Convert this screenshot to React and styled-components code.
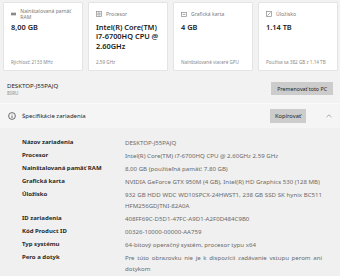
import React from 'react';
import styled, {createGlobalStyle} from 'styled-components';

const GlobalStyle = createGlobalStyle`
  html, body {
    margin: 0;
    padding: 0;
    background: #f2f2f2;
  }
  body {
    font-family: "Noto Sans", "Open Sans", sans-serif;
    color: #1b1b1b;
  }
`;

const Page = styled.div`
  width: 340px;
  height: 276px;
  overflow: hidden;
  background: #f2f2f2;
`;

const CardGrid = styled.div`
  display: grid;
  grid-template-columns: repeat(4, 1fr);
  gap: 5px;
  padding: 2px 2px 0 3px;
`;

const Card = styled.div`
  height: 69px;
  box-sizing: border-box;
  background: #ffffff;
  border: 1px solid #e4e4e4;
  border-radius: 1px;
  padding: 7px 6px 5px 7px;
  display: flex;
  flex-direction: column;
`;

const CardLabel = styled.div`
  display: flex;
  align-items: center;
  gap: 4px;
  font-size: 5.1px;
  color: #7a7a7a;
  height: 8px;
`;

const CardTitle = styled.div`
  margin-top: 5px;
  font-size: 7.4px;
  font-weight: 600;
  line-height: 9.3px;
  color: #1a1a1a;
`;

const CardFooter = styled.div`
  margin-top: auto;
  font-size: 4.6px;
  color: #8a8a8a;
  white-space: nowrap;
`;

const DeviceRow = styled.div`
  display: flex;
  align-items: center;
  justify-content: space-between;
  height: 29px;
  margin-top: 3px;
  padding: 0 7px;
  border-bottom: 1px solid #fafafa;
`;

const DeviceName = styled.div`
  font-size: 6.1px;
  color: #222;
  line-height: 8px;
`;

const DeviceModel = styled.div`
  font-size: 4.5px;
  color: #8a8a8a;
  line-height: 6px;
`;

const Button = styled.div`
  background: #cccccc;
  color: #1f1f1f;
  font-size: ${p => p.$size || 5.5}px;
  height: ${p => p.$h || 13}px;
  padding: 0 ${p => p.$px || 6}px;
  display: flex;
  align-items: center;
  justify-content: center;
  white-space: nowrap;
`;

const SpecHeader = styled.div`
  display: flex;
  align-items: center;
  height: 24px;
  padding: 0 8px 0 8px;
  background: #f5f5f5;
  gap: 6px;
`;

const SpecTitle = styled.div`
  flex: 1;
  font-size: 6px;
  color: #222;
`;

const Chevron = styled.div`
  width: 20px;
  display: flex;
  justify-content: flex-end;
`;

const SpecBody = styled.div`
  padding: 8px 0 0 22px;
  background: #f0f0f0;
  height: 200px;
`;

const SpecRow = styled.div`
  display: grid;
  grid-template-columns: 103px 197px;
  padding: 1px 0;
  line-height: 11px;
`;

const SpecLabel = styled.div`
  font-size: 6px;
  font-weight: 700;
  color: #2a2a2a;
`;

const SpecValue = styled.div`
  font-size: 6.1px;
  color: #6a6a6a;
  text-align: justify;
`;

const RamIcon = () => (
  <svg width="6" height="4" viewBox="0 0 6 4">
    <rect x="0" y="0.5" width="6" height="3" fill="#8a8a8a" />
  </svg>
);

const CpuIcon = () => (
  <svg width="6" height="6" viewBox="0 0 6 6" fill="none" stroke="#8a8a8a" strokeWidth="0.7">
    <rect x="0.5" y="0.5" width="5" height="5" />
    <rect x="2" y="2" width="2" height="2" />
  </svg>
);

const GpuIcon = () => (
  <svg width="6" height="5" viewBox="0 0 6 5" fill="none" stroke="#8a8a8a" strokeWidth="0.7">
    <rect x="0.4" y="0.4" width="5.2" height="4" />
    <line x1="1.5" y1="2.4" x2="4.5" y2="2.4" />
  </svg>
);

const DiskIcon = () => (
  <svg width="6" height="6" viewBox="0 0 6 6" fill="none" stroke="#8a8a8a" strokeWidth="0.7">
    <rect x="0.5" y="0.5" width="5" height="5" />
    <line x1="1.5" y1="4.5" x2="4.5" y2="1.5" />
  </svg>
);

const InfoIcon = () => (
  <svg width="8" height="8" viewBox="0 0 8 8" fill="none" stroke="#333" strokeWidth="0.7">
    <circle cx="4" cy="4" r="3.4" />
    <line x1="4" y1="3.5" x2="4" y2="6" />
    <circle cx="4" cy="2.3" r="0.3" fill="#333" stroke="none" />
  </svg>
);

const ChevronUp = () => (
  <svg width="6" height="4" viewBox="0 0 6 4" fill="none" stroke="#777" strokeWidth="0.6">
    <polyline points="0.5,3.2 3,0.8 5.5,3.2" />
  </svg>
);

const CARDS = [
  {icon: <RamIcon />, label: 'Nainštalovaná pamäť RAM', title: '8,00 GB', footer: 'Rýchlosť: 2133 MHz'},
  {icon: <CpuIcon />, label: 'Procesor', title: 'Intel(R) Core(TM) i7-6700HQ CPU @ 2.60GHz', footer: '2.59 GHz'},
  {icon: <GpuIcon />, label: 'Grafická karta', title: '4 GB', footer: 'Nainštalované viaceré GPU'},
  {icon: <DiskIcon />, label: 'Úložisko', title: '1.14 TB', footer: 'Používa sa 382 GB z 1.14 TB'},
];

const SPECS = [
  ['Názov zariadenia', 'DESKTOP-J55PAJQ'],
  ['Procesor', 'Intel(R) Core(TM) i7-6700HQ CPU @ 2.60GHz   2.59 GHz'],
  ['Nainštalovaná pamäť RAM', '8,00 GB (použiteľná pamäť: 7.80 GB)'],
  ['Grafická karta', 'NVIDIA GeForce GTX 950M (4 GB), Intel(R) HD Graphics 530 (128 MB)'],
  ['Úložisko', '932 GB HDD WDC WD10SPCX-24HWST1, 238 GB SSD SK hynix BC511 HFM256GDJTNI-82A0A'],
  ['ID zariadenia', '408FF69C-D5D1-47FC-A9D1-A2F0D484C9B0'],
  ['Kód Product ID', '00326-10000-00000-AA759'],
  ['Typ systému', '64-bitový operačný systém, procesor typu x64'],
  ['Pero a dotyk', 'Pre túto obrazovku nie je k dispozícii zadávanie vstupu perom ani dotykom'],
];

export default function App() {
  return (
    <Page>
      <GlobalStyle />
      <CardGrid>
        {CARDS.map(card => (
          <Card key={card.label}>
            <CardLabel>{card.icon}{card.label}</CardLabel>
            <CardTitle>{card.title}</CardTitle>
            <CardFooter>{card.footer}</CardFooter>
          </Card>
        ))}
      </CardGrid>
      <DeviceRow>
        <div>
          <DeviceName>DESKTOP-J55PAJQ</DeviceName>
          <DeviceModel>80RU</DeviceModel>
        </div>
        <Button $size={5.3} $h={13} $px={6}>Premenovať toto PC</Button>
      </DeviceRow>
      <SpecHeader>
        <InfoIcon />
        <SpecTitle>Špecifikácie zariadenia</SpecTitle>
        <Button $size={5.8} $h={14} $px={5}>Kopírovať</Button>
        <Chevron><ChevronUp /></Chevron>
      </SpecHeader>
      <SpecBody>
        {SPECS.map(([label, value]) => (
          <SpecRow key={label}>
            <SpecLabel>{label}</SpecLabel>
            <SpecValue>{value}</SpecValue>
          </SpecRow>
        ))}
      </SpecBody>
    </Page>
  );
}
